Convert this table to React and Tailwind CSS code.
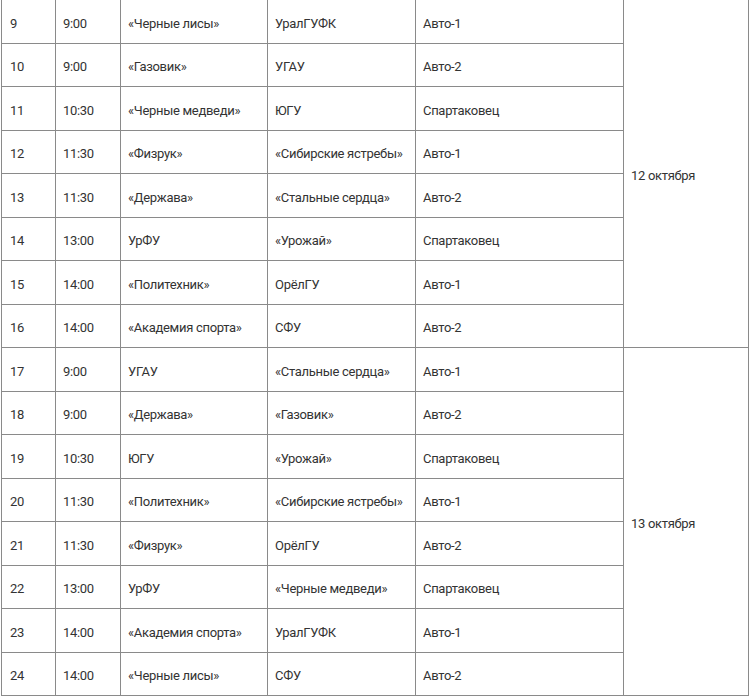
import React from 'react';

const games = [
  [9, '9:00', '«Черные лисы»', 'УралГУФК', 'Авто-1'],
  [10, '9:00', '«Газовик»', 'УГАУ', 'Авто-2'],
  [11, '10:30', '«Черные медведи»', 'ЮГУ', 'Спартаковец'],
  [12, '11:30', '«Физрук»', '«Сибирские ястребы»', 'Авто-1'],
  [13, '11:30', '«Держава»', '«Стальные сердца»', 'Авто-2'],
  [14, '13:00', 'УрФУ', '«Урожай»', 'Спартаковец'],
  [15, '14:00', '«Политехник»', 'ОрёлГУ', 'Авто-1'],
  [16, '14:00', '«Академия спорта»', 'СФУ', 'Авто-2'],
  [17, '9:00', 'УГАУ', '«Стальные сердца»', 'Авто-1'],
  [18, '9:00', '«Держава»', '«Газовик»', 'Авто-2'],
  [19, '10:30', 'ЮГУ', '«Урожай»', 'Спартаковец'],
  [20, '11:30', '«Политехник»', '«Сибирские ястребы»', 'Авто-1'],
  [21, '11:30', '«Физрук»', 'ОрёлГУ', 'Авто-2'],
  [22, '13:00', 'УрФУ', '«Черные медведи»', 'Спартаковец'],
  [23, '14:00', '«Академия спорта»', 'УралГУФК', 'Авто-1'],
  [24, '14:00', '«Черные лисы»', 'СФУ', 'Авто-2'],
];

const cell = 'border border-[#8a8a8a] px-[7px] pt-[4px] pb-0 align-middle whitespace-nowrap';

export default function App() {
  return (
    <div className="w-[750px] h-[697px] overflow-hidden bg-white font-['Roboto',sans-serif] text-[13px] tracking-[-0.3px] text-[#333]">
      <table className="-mt-px ml-px w-[747px] border-collapse table-fixed">
        <colgroup>
          <col className="w-[54px]" />
          <col className="w-[65px]" />
          <col className="w-[147px]" />
          <col className="w-[148px]" />
          <col className="w-[208px]" />
          <col className="w-[125px]" />
        </colgroup>
        <tbody>
          {games.map((g, i) => (
            <tr key={g[0]} className="h-[43.5px]">
              <td className={`${cell} pl-[8px]`}>{g[0]}</td>
              <td className={cell}>{g[1]}</td>
              <td className={cell}>{g[2]}</td>
              <td className={cell}>{g[3]}</td>
              <td className={cell}>{g[4]}</td>
              {i % 8 === 0 && (
                <td rowSpan={8} className={cell}>
                  {i === 0 ? '12 октября' : '13 октября'}
                </td>
              )}
            </tr>
          ))}
        </tbody>
      </table>
    </div>
  );
}
